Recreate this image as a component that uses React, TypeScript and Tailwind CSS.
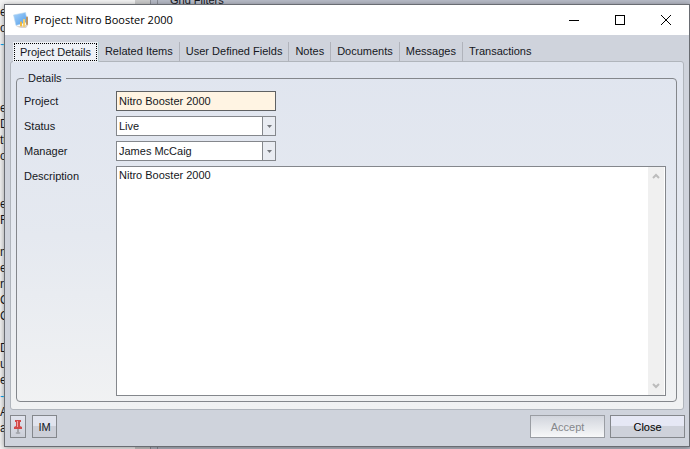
import React, { useState } from 'react';

const tabs = ['Related Items', 'User Defined Fields', 'Notes', 'Documents', 'Messages', 'Transactions'];

// Row labels of the list in the window behind
const listRows = [
  'e', 'o', '-', '', '', '', 'ed', 'D', 'tt', 'oi', '', '', 'es', 'R', '', 'm', 'e', 'rs', 'C', 'C', '', 'D', 'up', 'e', '-', 'A', 'a',
];

const AppIcon = () => (
  <svg className="w-4 h-4" viewBox="0 0 16 16">
    <defs>
      <linearGradient id="sheet" x1="0" y1="0" x2="1" y2="1">
        <stop offset="0" stopColor="#a9d3fa" />
        <stop offset="1" stopColor="#4f9be8" />
      </linearGradient>
    </defs>
    <path d="M0.5 3 L12.5 0.5 L14.5 10 L3 13.5 Z" fill="url(#sheet)" stroke="#b9d6f0" strokeWidth="0.6" />
    <path d="M3 14.5 L15.5 12.5 L13 16 L8 16 Z" fill="#d9d3cc" />
    <rect x="7" y="9.5" width="2" height="5" rx="0.8" fill="#f0b840" />
    <rect x="10" y="7" width="2.2" height="8" rx="0.8" fill="#f6cf6a" />
    <rect x="13" y="4.5" width="2" height="8.5" rx="0.8" fill="#b89468" />
  </svg>
);

const PinIcon = () => (
  <svg className="w-3 h-4" viewBox="0 0 12 16">
    <path d="M3 1h6v2H8v4l2 1v2H2V8l2-1V3H3z" fill="#d24a4a" />
    <path d="M5 2h1v6H5z" fill="#f3a3a3" />
    <path d="M5.5 10h1v4h-1z" fill="#777" />
    <ellipse cx="6" cy="14" rx="2.5" ry="1" fill="#a4a6ac" />
  </svg>
);

const Arrow = ({ d }: { d: string }) => (
  <svg className="w-2 h-2" viewBox="0 0 8 8" fill="none" stroke="#bcbcbc" strokeWidth="2">
    <path d={d} />
  </svg>
);

type SelectRowProps = { id: string; label: string; value: string };

const SelectRow = ({ id, label, value }: SelectRowProps) => (
  <div className="flex items-center">
    <label htmlFor={id} className="w-[92px] shrink-0">{label}</label>
    <div className="relative w-40">
      <select id={id} className="block w-full h-5 appearance-none border border-[#84878c] bg-white pl-0.5 pr-4 outline-none">
        <option>{value}</option>
      </select>
      <span className="pointer-events-none absolute inset-y-px right-px flex w-[13px] items-center justify-center border-l border-[#84878c] bg-[#e9ecf2]">
        <svg className="w-[5px] h-[3px]" viewBox="0 0 5 3"><path d="M0 0h5L2.5 3z" fill="#74777c" /></svg>
      </span>
    </div>
  </div>
);

const App = () => {
  const [project, setProject] = useState('Nitro Booster 2000');
  const [description, setDescription] = useState('Nitro Booster 2000');

  return (
    <div className="relative h-screen overflow-hidden bg-[#b8bcc8] font-['Liberation_Sans',Arial,sans-serif] text-[11px] leading-4 text-[#15171c]">
      {/* Window behind */}
      <div className="flex h-full">
        <div className="w-[135px] bg-[#f4f4f4] pt-1 text-[12px]">
          {listRows.map((row, i) => (
            <div key={i} className={row === '-' ? 'h-4 text-sky-500' : 'h-4'}>{row}</div>
          ))}
        </div>
        <div className="w-[15px] bg-[#cdcdcd]" />
        <div className="w-2 border-x border-[#8d9099] bg-[#b8bcc8]" />
        <div className="pl-3">
          <div className="-mt-2">Grid Filters</div>
        </div>
      </div>

      {/* Project window */}
      <div className="absolute top-1 right-0 bottom-[2px] left-1 flex flex-col border border-[#696c72] bg-[#cfd3dc] shadow-[0_1px_6px_rgba(0,0,0,0.4)]">
        <header className="flex h-[30px] shrink-0 items-center bg-white pl-2">
          <AppIcon />
          <h1 className="ml-[5px] font-['Open_Sans','Noto_Sans',sans-serif] text-[11px] text-black">Project: Nitro Booster 2000</h1>
          <div className="ml-auto flex h-full">
            <button aria-label="Minimize" className="flex w-[46px] items-center justify-center">
              <span className="h-px w-[10px] bg-black" />
            </button>
            <button aria-label="Maximize" className="flex w-[46px] items-center justify-center">
              <span className="size-[10px] border border-black" />
            </button>
            <button aria-label="Close window" className="flex w-[46px] items-center justify-center">
              <svg className="size-[10px]" viewBox="0 0 10 10" stroke="#000"><path d="M0 0l10 10M10 0L0 10" /></svg>
            </button>
          </div>
        </header>

        <nav className="relative z-10 -mb-px flex h-[27px] shrink-0 items-end pl-2" role="tablist">
          <button role="tab" aria-selected="true" className="h-5 border-r border-[#b4cdd2] bg-[#eef1f6] px-px">
            <span className="flex h-[18px] items-center border border-dotted border-black px-[5px]">Project Details</span>
          </button>
          {tabs.map((tab) => (
            <button key={tab} role="tab" aria-selected="false" className="h-5 border-r border-[#b0b3bb] px-1.5 pb-0.5 last:border-r-0">
              {tab}
            </button>
          ))}
        </nav>

        <main className="mx-[5px] flex min-h-0 flex-1 flex-col rounded-[3px] border border-[#b0b5bc] bg-linear-to-b from-[#e0e5ef] via-[#e5e9f0] to-[#f1f2f3] pt-2 pr-1.5 pb-[7px] pl-[5px]">
          <fieldset className="flex min-h-0 flex-1 flex-col rounded-[4px] border border-[#84878c] pr-[10px] pb-[5px] pl-[7px]">
            <legend className="px-1">Details</legend>
            <div className="flex h-full flex-col gap-[5px] pt-[5px]">
              <div className="flex items-center">
                <label htmlFor="project" className="w-[92px] shrink-0">Project</label>
                <input
                  id="project"
                  value={project}
                  onChange={(e) => setProject(e.target.value)}
                  className="h-5 w-40 border border-[#5f6163] bg-[#fff4e3] px-0.5 outline-none"
                />
              </div>
              <SelectRow id="status" label="Status" value="Live" />
              <SelectRow id="manager" label="Manager" value="James McCaig" />
              <div className="flex min-h-0 flex-1">
                <label htmlFor="description" className="w-[92px] shrink-0 pt-0.5">Description</label>
                <div className="flex flex-1 border border-[#84878c] bg-white pr-px">
                  <textarea
                    id="description"
                    value={description}
                    onChange={(e) => setDescription(e.target.value)}
                    className="flex-1 resize-none px-0.5 outline-none"
                  />
                  <div className="flex w-4 flex-col items-center justify-between bg-[#f0f0f0] py-[5px]">
                    <Arrow d="M1 6l3-3 3 3" />
                    <Arrow d="M1 2l3 3 3-3" />
                  </div>
                </div>
              </div>
            </div>
          </fieldset>
        </main>

        <footer className="flex shrink-0 items-center pt-[5px] pr-1 pb-2 pl-[5px]">
          <button aria-label="Pin" className="flex h-[23px] w-4 items-center justify-center border border-[#84878c] bg-linear-to-b from-[#e1e4ee] to-[#cccfd8]">
            <PinIcon />
          </button>
          <button className="ml-1.5 h-[23px] w-[25px] border border-[#84878c] bg-linear-to-b from-[#e1e4ee] from-45% to-[#cccfd8] to-50%">IM</button>
          <button disabled className="ml-auto h-[23px] w-[75px] border border-[#9a9da3] bg-linear-to-b from-[#d2d5dd] to-[#f7f8f9] text-[#85878b]">Accept</button>
          <button className="ml-[5px] h-[23px] w-[75px] border border-[#84878c] bg-linear-to-b from-[#e6e8f5] from-45% to-[#ced1da] to-50% text-black">Close</button>
        </footer>
      </div>
    </div>
  );
};

export default App;
